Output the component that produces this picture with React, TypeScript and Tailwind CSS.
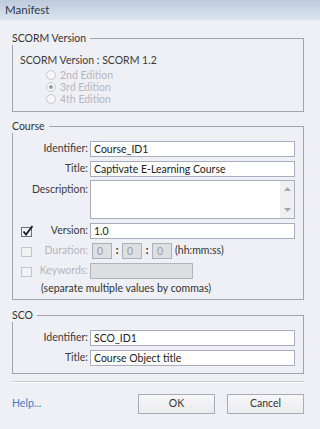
import React from "react";

// small drawn controls
const Radio = ({ checked }: { checked?: boolean }) => (
	<span className="w-[10px] h-[10px] rounded-full border border-[#c9c9cf] bg-[#f7f7f9] flex items-center justify-center">
		{checked && <span className="w-[4px] h-[4px] rounded-full bg-[#9c9ca4]" />}
	</span>
);

const CheckBox = ({ checked, disabled }: { checked?: boolean; disabled?: boolean }) => (
	<svg width="13" height="12" viewBox="0 0 13 12" className="shrink-0">
		<rect
			x="0.5"
			y="2.5"
			width="10"
			height="9"
			fill={disabled ? "#f2f3f6" : "#f4f5f8"}
			stroke={disabled ? "#c3c5cf" : "#6d6f7c"}
		/>
		{checked && (
			<path d="M2.5 6.5 L5 9.5 L11.5 1" fill="none" stroke="#1a1a1a" strokeWidth="1.8" />
		)}
	</svg>
);

const TextBox = ({ value, className = "" }: { value?: string; className?: string }) => (
	<div
		className={`h-[16px] bg-white border border-[#a9adbf] pl-[3px] flex items-center text-[#222] leading-none ${className}`}
	>
		{value}
	</div>
);

const Label = ({ children, disabled }: { children: React.ReactNode; disabled?: boolean }) => (
	<span className={disabled ? "text-[#b4b6bd]" : "text-[#3a3a3a]"}>{children}</span>
);

const App = () => {
	return (
		<div className="w-[320px] h-[429px] bg-[#eff0f5] font-['Lato',sans-serif] text-[10.5px] text-[#3a3a3a] flex flex-col overflow-hidden">
			{/* title bar */}
			<div className="h-[20px] bg-linear-to-b from-[#bdcbdd] to-[#dce5f1] pl-[5px] flex items-center text-[11.5px] text-[#2f3a48]">
				Manifest
			</div>

			<div className="pl-[12px] pr-[16px] pt-[11px] flex flex-col">
				{/* SCORM version */}
				<fieldset className="border border-[#a0a3b4] m-0 p-0">
					<legend className="leading-[14px] pr-[4px] -ml-px text-[#333]">SCORM Version</legend>
					<div className="pt-[8px] pb-[6px] pl-[7px]">
						<div className="leading-[14px]">SCORM Version : SCORM 1.2</div>
						<div className="mt-[2px] ml-[26px] flex flex-col text-[#b4b6bd] leading-[12px]">
							<div className="h-[12px] flex items-center gap-[4px]">
								<Radio />
								<span>2nd Edition</span>
							</div>
							<div className="h-[12px] flex items-center gap-[4px]">
								<Radio checked />
								<span>3rd Edition</span>
							</div>
							<div className="h-[12px] flex items-center gap-[4px]">
								<Radio />
								<span>4th Edition</span>
							</div>
						</div>
					</div>
				</fieldset>

				{/* Course */}
				<fieldset className="border border-[#a0a3b4] m-0 p-0 mt-[7px]">
					<legend className="leading-[14px] pr-[4px] -ml-px text-[#333]">Course</legend>
					<div className="pt-[8px] pb-[4px] pr-[8px] flex flex-col">
						<div className="flex items-center gap-[2px]">
							<div className="w-[75px] flex justify-end">
								<Label>Identifier:</Label>
							</div>
							<TextBox value="Course_ID1" className="flex-1" />
						</div>
						<div className="mt-[4px] flex items-center gap-[2px]">
							<div className="w-[75px] flex justify-end">
								<Label>Title:</Label>
							</div>
							<TextBox value="Captivate E-Learning Course" className="flex-1" />
						</div>
						<div className="mt-[3px] flex items-start gap-[2px]">
							<div className="w-[75px] flex justify-end pt-[2px] leading-[14px]">
								<Label>Description:</Label>
							</div>
							<div className="flex-1 h-[39px] bg-white border border-[#a9adbf] flex justify-end">
								<div className="w-[14px] bg-[#f0f0f2] flex flex-col items-center justify-between py-[6px]">
									<svg width="7" height="4" viewBox="0 0 7 4">
										<path d="M0 4 L3.5 0 L7 4 Z" fill="#a5a7ae" />
									</svg>
									<svg width="7" height="4" viewBox="0 0 7 4">
										<path d="M0 0 L3.5 4 L7 0 Z" fill="#a5a7ae" />
									</svg>
								</div>
							</div>
						</div>
						<div className="mt-[4px] flex items-center gap-[2px]">
							<div className="w-[75px] flex items-center justify-between pl-[8px]">
								<CheckBox checked />
								<Label>Version:</Label>
							</div>
							<TextBox value="1.0" className="flex-1" />
						</div>
						<div className="mt-[4px] flex items-center gap-[2px]">
							<div className="w-[75px] flex items-center justify-between pl-[8px]">
								<CheckBox disabled />
								<Label disabled>Duration:</Label>
							</div>
							<div className="flex items-center ml-[2px]">
								<div className="w-[20px] h-[16px] bg-[#dedfe1] border border-[#aeb0b8] pl-[4px] flex items-center text-[#9a9ba0] leading-none">
									0
								</div>
								<span className="w-[10px] text-center text-[#222] font-bold">:</span>
								<div className="w-[20px] h-[16px] bg-[#dedfe1] border border-[#aeb0b8] pl-[4px] flex items-center text-[#9a9ba0] leading-none">
									0
								</div>
								<span className="w-[10px] text-center text-[#222] font-bold">:</span>
								<div className="w-[20px] h-[16px] bg-[#dedfe1] border border-[#aeb0b8] pl-[4px] flex items-center text-[#9a9ba0] leading-none">
									0
								</div>
								<span className="ml-[3px] text-[#333]">(hh:mm:ss)</span>
							</div>
						</div>
						<div className="mt-[4px] flex items-center gap-[2px]">
							<div className="w-[75px] flex items-center justify-between pl-[8px]">
								<CheckBox disabled />
								<Label disabled>Keywords:</Label>
							</div>
							<div className="w-[103px] h-[16px] bg-[#dedfe1] border border-[#b3b5bc]" />
						</div>
						<div className="mt-[2px] pl-[28px] leading-[14px] text-[#333]">
							(separate multiple values by commas)
						</div>
					</div>
				</fieldset>

				{/* SCO */}
				<fieldset className="border border-[#a0a3b4] m-0 p-0 mt-[8px]">
					<legend className="leading-[14px] pr-[4px] -ml-px text-[#333]">SCO</legend>
					<div className="pt-[8px] pb-[7px] pr-[8px] flex flex-col">
						<div className="flex items-center gap-[2px]">
							<div className="w-[75px] flex justify-end">
								<Label>Identifier:</Label>
							</div>
							<TextBox value="SCO_ID1" className="flex-1" />
						</div>
						<div className="mt-[4px] flex items-center gap-[2px]">
							<div className="w-[75px] flex justify-end">
								<Label>Title:</Label>
							</div>
							<TextBox value="Course Object title" className="flex-1" />
						</div>
					</div>
				</fieldset>

				<div className="mt-[7px] border-t border-[#c9cbd5] border-b-white border-b" />

				{/* footer */}
				<div className="mt-[11px] flex items-center">
					<span className="text-[#3d7cc9]">Help...</span>
					<button className="ml-auto w-[77px] h-[20px] bg-linear-to-b from-[#f7f7f9] to-[#ececef] border border-[#a9abbd] text-[#333]">
						OK
					</button>
					<button className="ml-[12px] w-[77px] h-[20px] bg-linear-to-b from-[#f7f7f9] to-[#ececef] border border-[#a9abbd] text-[#333]">
						Cancel
					</button>
				</div>
			</div>
		</div>
	);
};

export default App;
